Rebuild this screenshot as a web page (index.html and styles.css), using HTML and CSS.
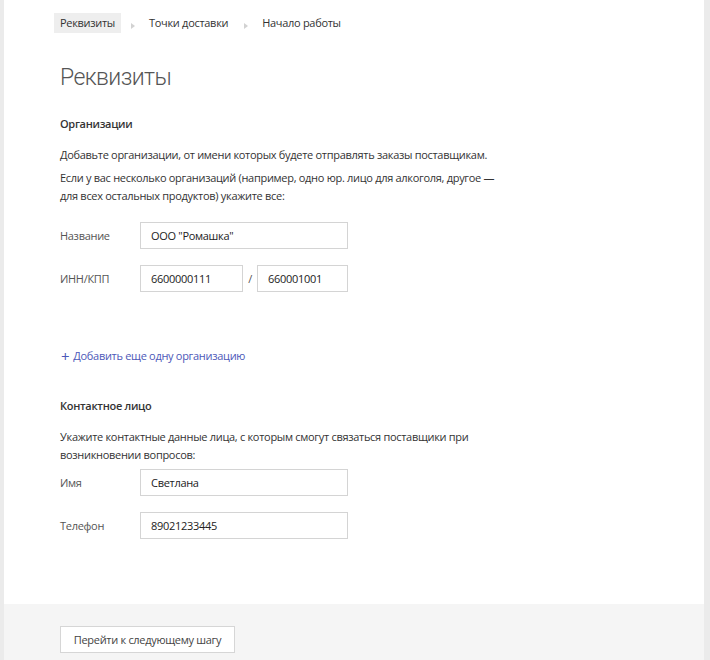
FILE: index.html
```html
<!DOCTYPE html>
<html lang="ru">
<head>
<meta charset="utf-8">
<link rel="stylesheet" href="styles.css">
</head>
<body>
<div class="page">
  <main class="content">
    <nav class="crumbs">
      <span class="crumb active">Реквизиты</span>
      <span class="arrow"></span>
      <span class="crumb">Точки доставки</span>
      <span class="arrow"></span>
      <span class="crumb">Начало работы</span>
    </nav>
    <h1 class="title">Реквизиты</h1>

    <section class="section">
      <h2 class="subtitle">Организации</h2>
      <p class="text">Добавьте организации, от имени которых будете отправлять заказы поставщикам.</p>
      <p class="text text-tight">Если у вас несколько организаций (например, одно юр. лицо для алкоголя, другое —<br>для всех остальных продуктов) укажите все:</p>
      <div class="row row-first">
        <label class="label">Название</label>
        <input class="input input-wide" value="ООО &quot;Ромашка&quot;">
      </div>
      <div class="row">
        <label class="label">ИНН/КПП</label>
        <input class="input input-inn" value="6600000111">
        <span class="slash">/</span>
        <input class="input input-kpp" value="660001001">
      </div>
      <a class="add-link" href="#"><span class="plus">+</span>Добавить еще одну организацию</a>
    </section>

    <section class="section section-contact">
      <h2 class="subtitle">Контактное лицо</h2>
      <p class="text">Укажите контактные данные лица, с которым смогут связаться поставщики при<br>возникновении вопросов:</p>
      <div class="row row-contact">
        <label class="label">Имя</label>
        <input class="input input-wide" value="Светлана">
      </div>
      <div class="row">
        <label class="label">Телефон</label>
        <input class="input input-wide" value="89021233445">
      </div>
    </section>
  </main>
  <footer class="footer">
    <button class="btn">Перейти к следующему шагу</button>
  </footer>
</div>
</body>
</html>
```

FILE: styles.css
```css
* { box-sizing: border-box; }
html, body { margin: 0; padding: 0; }
body {
  background: #ebebeb;
  font-family: "Open Sans", "Noto Sans", sans-serif;
  font-size: 11px;
  letter-spacing: -0.3px;
  color: #333;
}
.page {
  margin-left: 4px;
  width: 700px;
  height: 660px;
  background: #fff;
  display: flex;
  flex-direction: column;
}
.content {
  flex: 1;
  padding: 13px 0 0 56px;
}
.crumbs {
  display: flex;
  align-items: center;
  height: 20px;
  margin-left: -6px;
}
.crumb {
  line-height: 20px;
  color: #333;
  padding: 0 6px;
}
.crumb.active {
  background: #eeeeee;
}
.arrow {
  width: 0;
  height: 0;
  border-top: 3px solid transparent;
  border-bottom: 3px solid transparent;
  border-left: 4px solid #d2d2d2;
  margin: 5px 8px 0 10px;
}
.title {
  margin: 29px 0 0;
  font-family: Roboto, "Open Sans", sans-serif;
  font-size: 23px;
  font-weight: 300;
  letter-spacing: -0.6px;
  color: #555;
  line-height: 32px;
}
.subtitle {
  margin: 22px 0 0;
  font-size: 11px;
  font-weight: 600;
  color: #333;
  line-height: 16px;
}
.text {
  margin: 14px 0 0;
  line-height: 18px;
}
.text-tight { margin-top: 5px; }
.row {
  display: flex;
  align-items: center;
  margin-top: 16px;
}
.row-first { margin-top: 17px; }
.label {
  width: 80px;
  color: #555;
}
.input {
  height: 27px;
  border: 1px solid #d4d4d4;
  padding: 0 10px;
  font: inherit;
  letter-spacing: inherit;
  color: #222;
  background: #fff;
  outline: none;
}
.input-wide { width: 208px; }
.input-inn { width: 103px; }
.input-kpp { width: 91px; }
.slash {
  width: 14px;
  text-align: center;
  color: #555;
}
.add-link {
  display: inline-flex;
  align-items: center;
  margin-top: 56px;
  color: #4d58b8;
  text-decoration: none;
  line-height: 16px;
}
.plus {
  font-size: 15px;
  font-weight: 500;
  margin: 0 4px 0 1px;
}
.section-contact .subtitle { margin-top: 33px; }
.row-contact { margin-top: 5px; }
.footer {
  height: 56px;
  background: #f5f5f5;
  padding: 22px 0 0 56px;
}
.btn {
  height: 27px;
  width: 175px;
  border: 1px solid #d6d6d6;
  background: #fff;
  font: inherit;
  letter-spacing: inherit;
  color: #444;
  padding: 0;
}
```
